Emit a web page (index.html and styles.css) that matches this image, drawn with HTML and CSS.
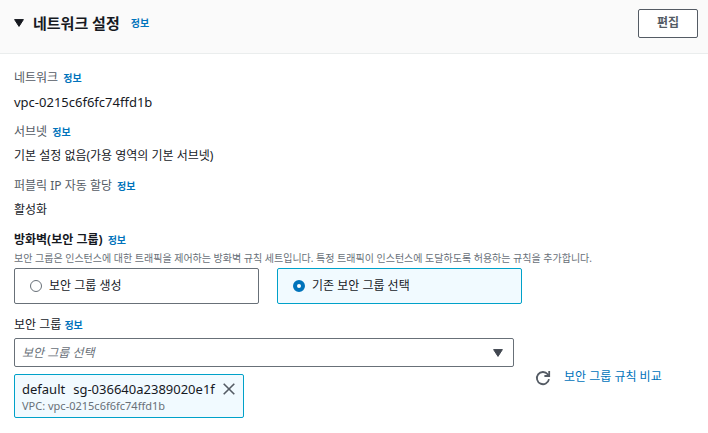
FILE: index.html
```html
<!DOCTYPE html>
<html lang="ko">
<head>
  <meta charset="UTF-8" />
  <title>네트워크 설정</title>
  <meta name="viewport" content="width=device-width, initial-scale=1.0">
  <link rel="stylesheet" href="styles.css">
</head>
<body>
  <section class="panel">
    <header class="panel-header">
      <button type="button" class="toggle" aria-label="접기">
        <svg width="10" height="8" viewBox="0 0 10 8"><path d="M0.6 0.6h8.8L5 7.4z" fill="#16191f" stroke="#16191f" stroke-linejoin="round"/></svg>
      </button>
      <h2>네트워크 설정</h2>
      <a href="#" class="info">정보</a>
      <button type="button" class="edit">편집</button>
    </header>

    <div class="panel-body">
      <dl class="summary">
        <div class="item">
          <dt>네트워크 <a href="#" class="info">정보</a></dt>
          <dd class="resource-id">vpc-0215c6f6fc74ffd1b</dd>
        </div>
        <div class="item">
          <dt>서브넷 <a href="#" class="info">정보</a></dt>
          <dd>기본 설정 없음(가용 영역의 기본 서브넷)</dd>
        </div>
        <div class="item">
          <dt>퍼블릭 IP 자동 할당 <a href="#" class="info">정보</a></dt>
          <dd>활성화</dd>
        </div>
      </dl>

      <div class="firewall" role="radiogroup" aria-labelledby="firewall-title">
        <div class="field-title"><strong id="firewall-title">방화벽(보안 그룹)</strong> <a href="#" class="info">정보</a></div>
        <p class="hint">보안 그룹은 인스턴스에 대한 트래픽을 제어하는 방화벽 규칙 세트입니다. 특정 트래픽이 인스턴스에 도달하도록 허용하는 규칙을 추가합니다.</p>
        <div class="tiles">
          <label class="tile">
            <input type="radio" name="firewall" value="create">
            <span>보안 그룹 생성</span>
          </label>
          <label class="tile selected">
            <input type="radio" name="firewall" value="existing" checked>
            <span>기존 보안 그룹 선택</span>
          </label>
        </div>
      </div>

      <div class="groups">
        <div class="picker">
          <div class="picker-label"><label for="group">보안 그룹</label> <a href="#" class="info">정보</a></div>
          <div class="select-wrap">
            <select id="group">
              <option value="">보안 그룹 선택</option>
              <option value="default">default</option>
            </select>
            <svg class="caret" width="10" height="8" viewBox="0 0 10 8"><path d="M0.6 0.6h8.8L5 7.4z" fill="#414750" stroke="#414750" stroke-linejoin="round"/></svg>
          </div>
          <div class="token">
            <div>
              <div class="token-name resource-id"><span>default</span><span>sg-036640a2389020e1f</span></div>
              <div class="token-vpc">VPC: vpc-0215c6f6fc74ffd1b</div>
            </div>
            <button type="button" class="remove" aria-label="제거">
              <svg width="12" height="12" viewBox="0 0 12 12"><path d="M0.7 0.7l10.6 10.6M11.3 0.7L0.7 11.3" stroke="#545b64" stroke-width="1.6"/></svg>
            </button>
          </div>
        </div>
        <div class="actions">
          <button type="button" class="refresh" aria-label="새로 고침">
            <svg width="16" height="16" viewBox="0 0 16 16" fill="none" stroke="#545b64" stroke-width="1.8"><path d="M14 9.2A6.1 6.1 0 1 1 12.7 4.2L13.8 5.6"/><path d="M14.2 1v5H9.4"/></svg>
          </button>
          <a href="#" class="compare">보안 그룹 규칙 비교</a>
        </div>
      </div>
    </div>
  </section>
</body>
</html>
```
FILE: styles.css
```css
* {
  box-sizing: border-box;
}

body {
  margin: 0;
  background: #fff;
  color: #16191f;
  font-family: "Noto Sans", "Noto Sans CJK KR", sans-serif;
  font-size: 12px;
  line-height: 18px;
}

button {
  font: inherit;
  padding: 0;
  border: 0;
  background: none;
  cursor: pointer;
}

svg {
  display: block;
}

a {
  color: #0073bb;
  text-decoration: none;
}

.info {
  font-size: 10px;
  font-weight: 700;
  margin-left: 2px;
}

.resource-id {
  font-size: 13px;
}

.panel-header {
  display: flex;
  align-items: center;
  height: 54px;
  padding: 0 10px 7px 14px;
  background: #fafafa;
  border-bottom: 1px solid #eaeded;
}

.panel-header h2 {
  margin: 0 9px;
  font-size: 15px;
  line-height: 24px;
}

.edit {
  margin-left: auto;
  width: 60px;
  height: 29px;
  border: 1px solid #545b64;
  border-radius: 2px;
  background: #fff;
  color: #545b64;
  font-weight: 700;
}

.panel-body {
  padding: 15px 14px;
}

.summary {
  display: grid;
  gap: 12px;
  margin: 0;
}

.item {
  display: grid;
  gap: 6px;
}

.item dt {
  color: #545b64;
}

.item dd {
  margin: 0;
}

.firewall {
  margin-top: 12px;
}

.hint {
  margin: 0;
  color: #687078;
  font-size: 10px;
}

.tiles {
  display: grid;
  grid-template-columns: 1fr 1fr;
  gap: 18px;
  max-width: 508px;
  margin-top: 1px;
}

.tile {
  display: flex;
  align-items: center;
  gap: 7px;
  height: 36px;
  padding: 0 15px;
  border: 1px solid #687078;
  border-radius: 2px;
}

.tile.selected {
  background: #f1faff;
  border-color: #00a1c9;
}

.tile input {
  appearance: none;
  width: 12px;
  height: 12px;
  margin: 0;
  border: 1px solid #687078;
  border-radius: 50%;
  background: #fff;
}

.tile input:checked {
  border: 4px solid #0073bb;
}

.groups {
  display: flex;
  gap: 21px;
  margin-top: 12px;
}

.picker {
  flex: 1;
}

.picker-label .info {
  margin-left: 0;
}

.select-wrap {
  position: relative;
  margin: 4px 0 7px;
}

.select-wrap select {
  display: block;
  appearance: none;
  width: 100%;
  height: 29px;
  padding: 0 30px 0 7px;
  border: 1px solid #687078;
  border-radius: 2px;
  background: #fff;
  color: #687078;
  font: inherit;
  font-style: italic;
}

.caret {
  position: absolute;
  top: 11px;
  right: 11px;
  pointer-events: none;
}

.token {
  display: inline-flex;
  align-items: flex-start;
  gap: 8px;
  padding: 5px 8px 3px 7px;
  border: 1px solid #00a1c9;
  border-radius: 2px;
  background: #f1faff;
}

.token-name {
  display: flex;
  gap: 8px;
}

.token-vpc {
  color: #687078;
  font-size: 11px;
  line-height: 16px;
}

.remove {
  padding: 3px 0;
}

.actions {
  display: flex;
  align-items: flex-end;
  gap: 13px;
  width: 159px;
  padding-bottom: 32px;
}

.compare {
  white-space: nowrap;
}
```
